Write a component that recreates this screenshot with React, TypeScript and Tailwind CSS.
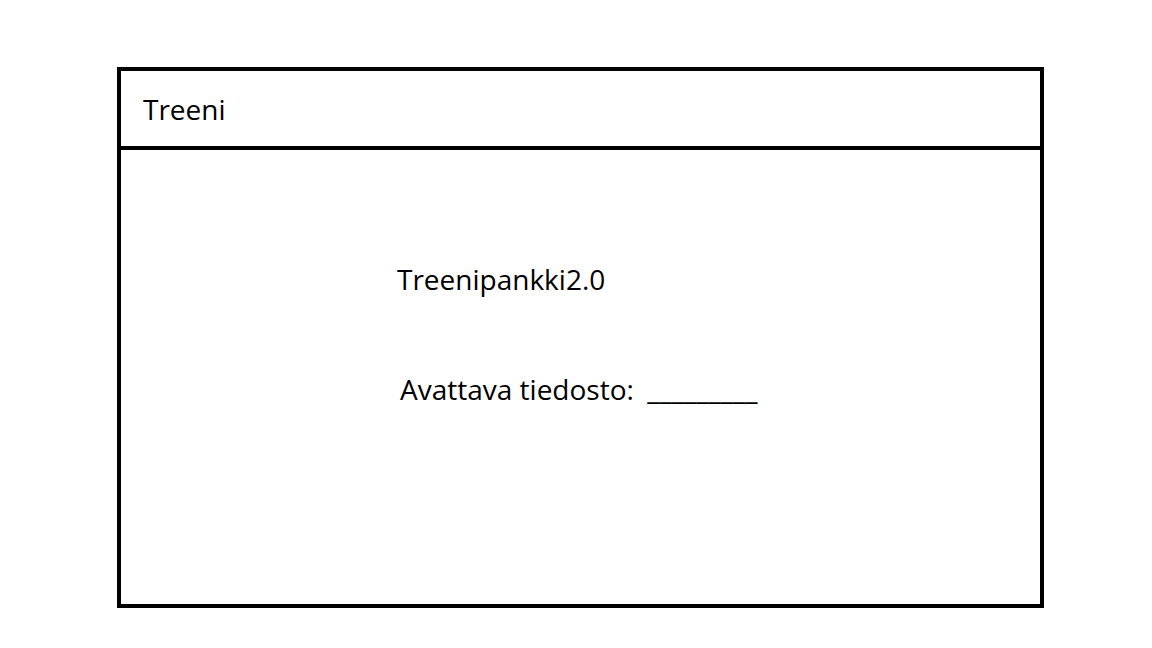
export default function App() {
	return (
		<div className="h-[648px] w-[1152px] bg-white pl-[117px] pt-[67px] font-['Open_Sans',sans-serif] text-black">
			<div className="flex h-[541px] w-[927px] flex-col border-4 border-black">
				<div className="flex h-[79px] shrink-0 items-center border-b-4 border-black pl-[22px]">
					<span className="text-[28px] leading-[38px]">Treeni</span>
				</div>
				<div className="flex flex-col pl-[276px] pt-[110px]">
					<span className="text-[28px] leading-[38px]">Treenipankki2.0</span>
					<span className="ml-[3px] mt-[72px] text-[28px] leading-[38px]">
						Avattava tiedosto: <span className="ml-[6px]">_________</span>
					</span>
				</div>
			</div>
		</div>
	)
}
